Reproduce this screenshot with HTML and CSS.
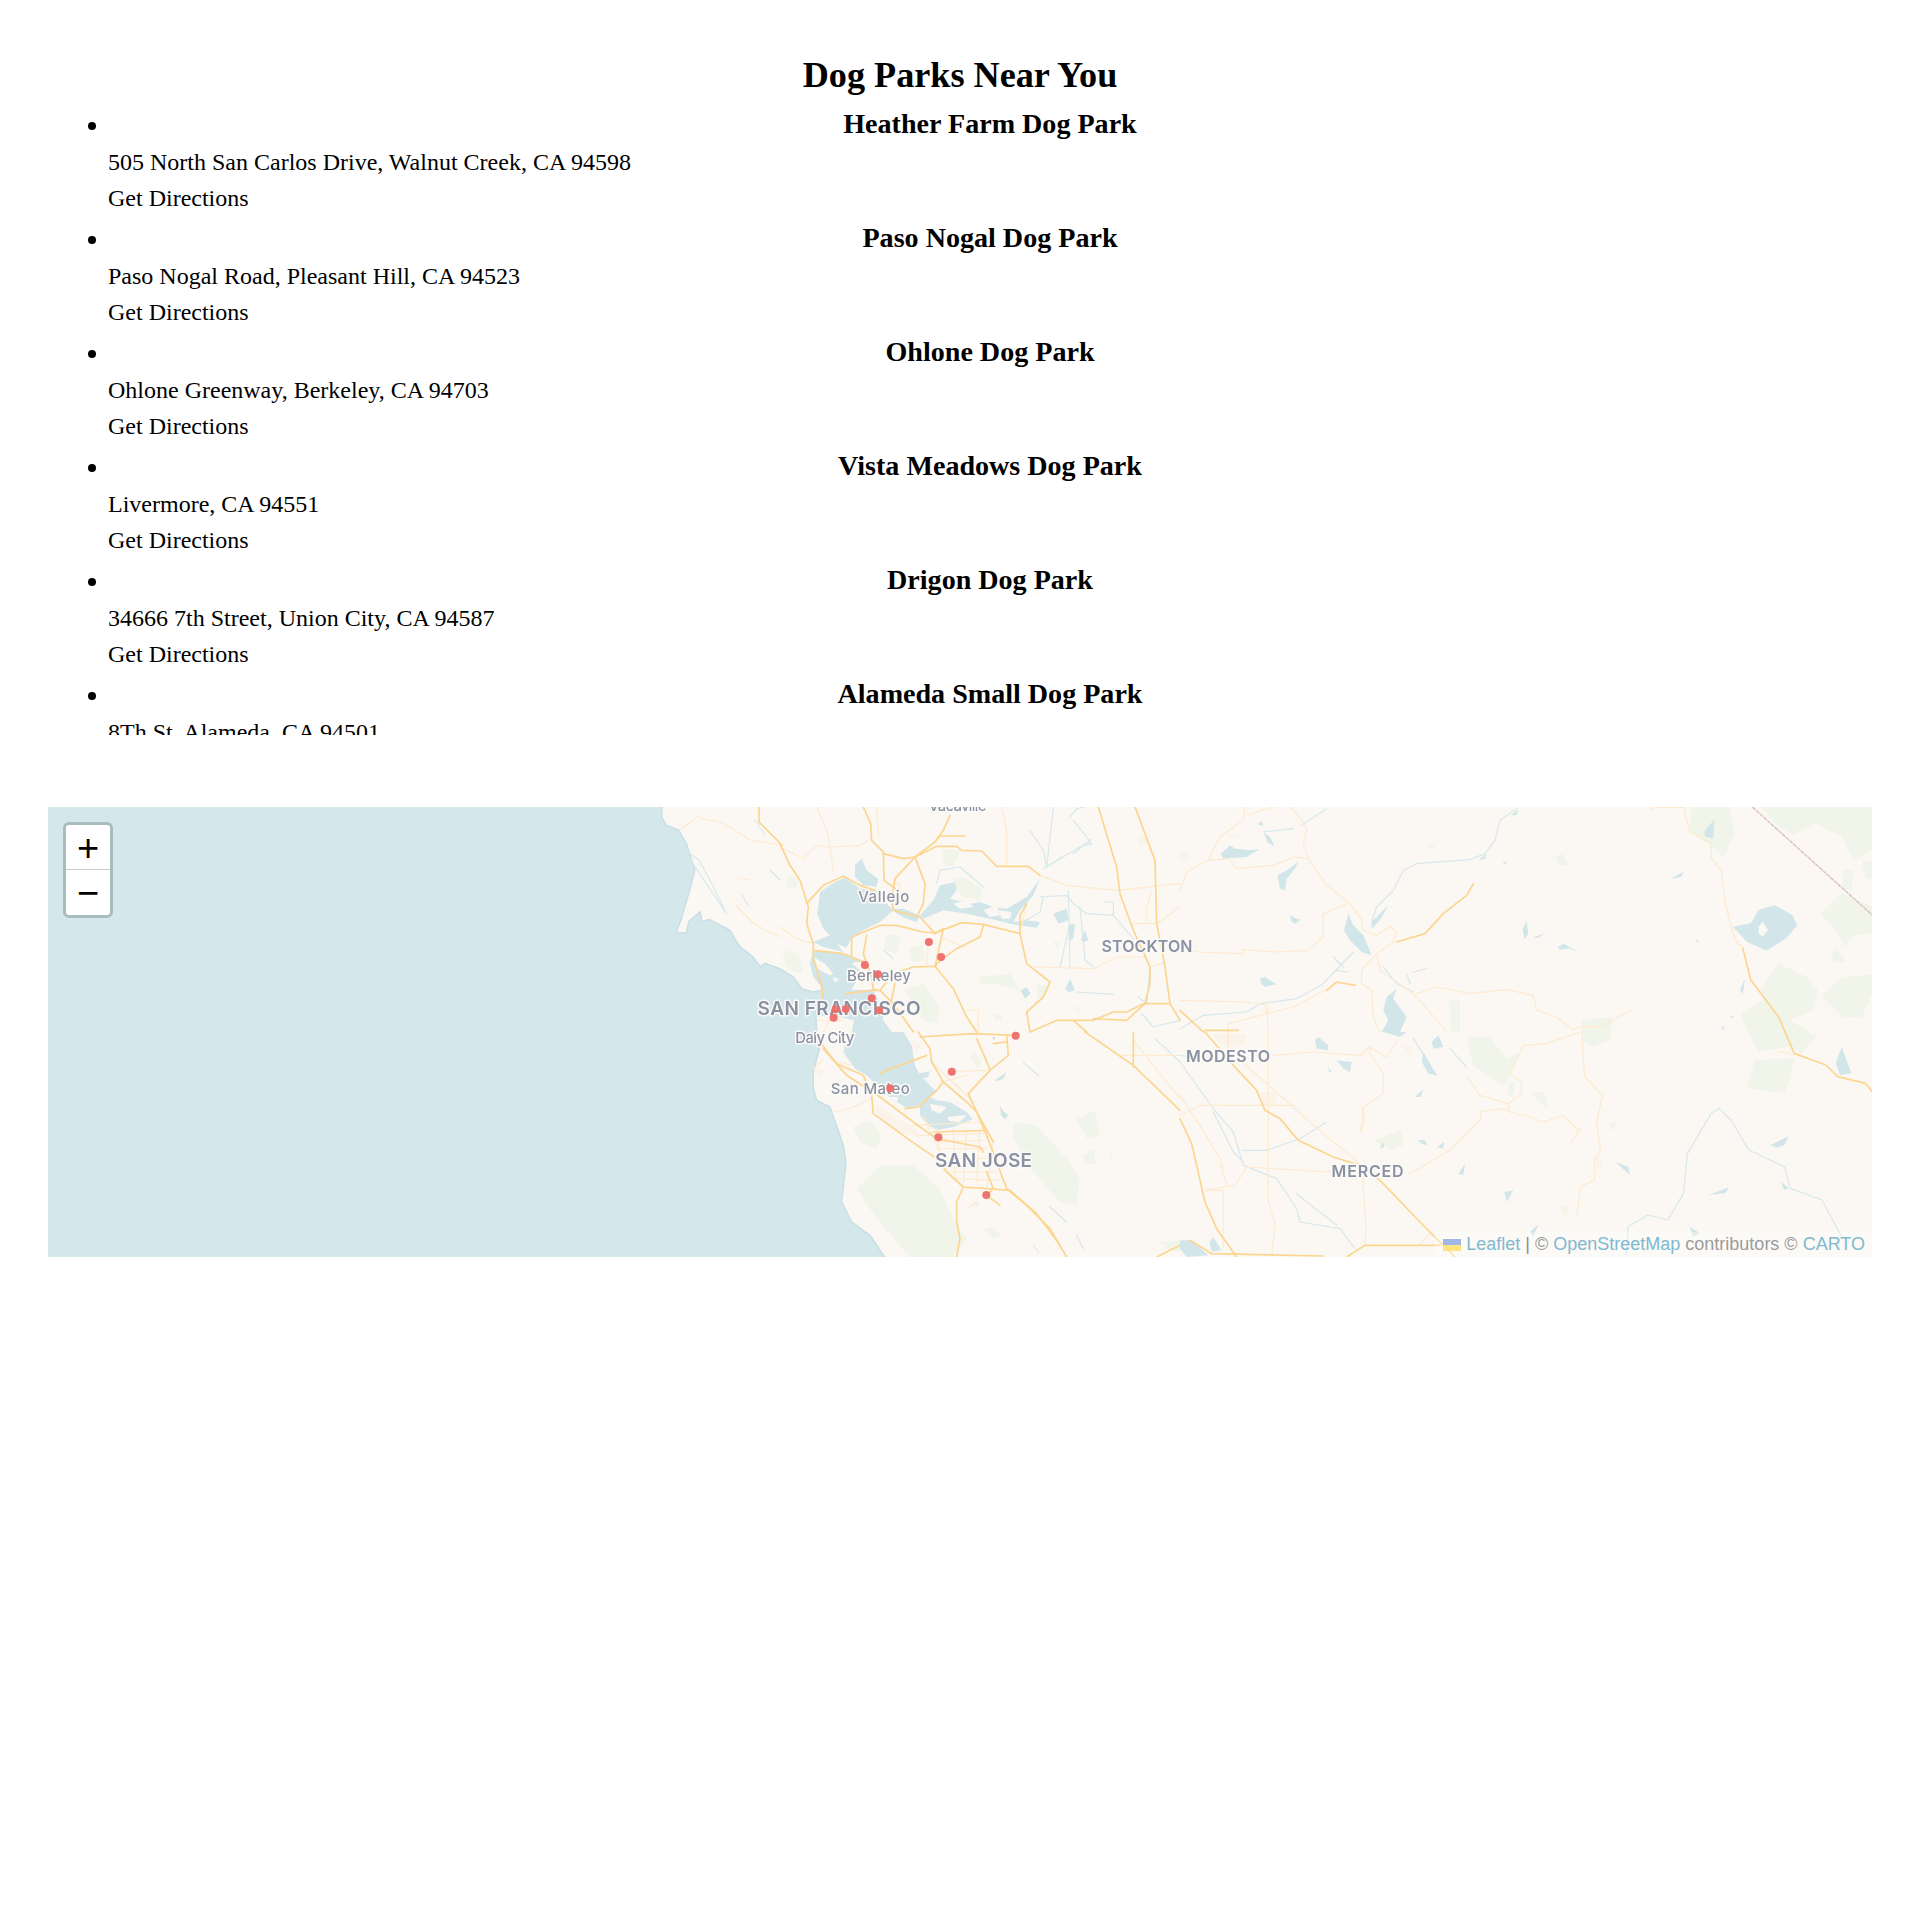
FILE: index.html
```html
<!DOCTYPE html>
<html lang="en">
<head>
<meta charset="utf-8">
<title>Dog Parks Near You</title>
<link rel="stylesheet" href="styles.css">
</head>
<body>
<main class="page">
  <h1 class="title">Dog Parks Near You</h1>
  <ul class="parks">
    <li class="park"><h2 class="park-name">Heather Farm Dog Park</h2><p class="park-line">505 North San Carlos Drive, Walnut Creek, CA 94598</p><p class="park-line">Get Directions</p></li>
    <li class="park"><h2 class="park-name">Paso Nogal Dog Park</h2><p class="park-line">Paso Nogal Road, Pleasant Hill, CA 94523</p><p class="park-line">Get Directions</p></li>
    <li class="park"><h2 class="park-name">Ohlone Dog Park</h2><p class="park-line">Ohlone Greenway, Berkeley, CA 94703</p><p class="park-line">Get Directions</p></li>
    <li class="park"><h2 class="park-name">Vista Meadows Dog Park</h2><p class="park-line">Livermore, CA 94551</p><p class="park-line">Get Directions</p></li>
    <li class="park"><h2 class="park-name">Drigon Dog Park</h2><p class="park-line">34666 7th Street, Union City, CA 94587</p><p class="park-line">Get Directions</p></li>
    <li class="park"><h2 class="park-name">Alameda Small Dog Park</h2><p class="park-line">8Th St, Alameda, CA 94501</p><p class="park-line">Get Directions</p></li>
  </ul>
  <section class="map">
    <svg class="map-art" viewBox="48 807 1824 450" aria-hidden="true">
      <rect class="land" x="40" y="800" width="1840" height="465"/>
      <path class="ocean" d="M40,800H662.2L661.7,816.7L665.8,825L678.6,830L686.2,843.3L694.9,870L688.8,893.3L681,920L676,932.7L686.2,933.3L688.8,921.7L694,917L700,912L702,922L709,919.3L729.6,930L739.8,946.7L752.6,956.7L760.2,966.7L765.3,963.3L780,968.7L793.3,977L801.7,988.7L813.3,992L821.7,990.3L826,1000L816,1017L816.7,1032L819.3,1048.7L813.3,1072L813.3,1088.7L816.7,1100.3L830,1107L843.3,1145.3L846,1162L841.7,1202L851.7,1222L870,1235.3L890,1265H40Z"/>

      <!-- coast north of the bay: 1x page grid -->
      <g class="river">
        <path d="M683.7,849L694,865L726,913L712,884L699,860Z"/>
        <path d="M700,925L712,935L722,950M742,895L748,905M755,820L765,835M770,870L780,880"/>
      </g>
      <g class="park-area"><path d="M788,877L798,875L797,888L790,888Z"/><path d="M783,950L800,955L795,972L785,965Z"/></g>
      <g class="minor">
        <path d="M700,818L723,823L750,840L780,845M738,878L750,880M734,903L753,923L765,930L780,937M680,830L700,815"/>
      </g>
      <g class="major"><path d="M759,807V822L782,845"/></g>

      <!-- north bay crop -->
      <g transform="translate(780 807) scale(.33333)">
        <g class="park-area">
          <path d="M520,210L560,215L610,250L600,280L550,270L525,240Z"/><path d="M490,125L540,130L520,180L490,170Z"/><path d="M320,380L360,385L355,440L310,430Z"/><path d="M385,420L430,415L435,460L395,465Z"/>
          <path d="M600,510L690,500L720,550L640,530L600,530Z"/><path d="M770,530L810,540L790,570L770,570Z"/><path d="M370,550L430,530L480,600L470,650L430,640Z"/><path d="M20,220L50,220L45,245L20,240Z"/><path d="M15,460L60,460L70,500L30,490Z"/><path d="M640,620H665V640H645Z"/><path d="M820,400L840,410L830,425Z"/>
        </g>
        <g class="urban"><path d="M885,600L905,595L900,625L885,620Z"/><path d="M1070,90L1110,80L1105,115L1075,115Z"/></g>
        <path class="bay" d="M120,255L165,225L195,212L240,245L285,250L320,290L340,310L300,345L250,370L215,395L190,435L130,420L100,405L150,385L130,365L112,320Z"/>
        <path class="bay" d="M225,175L245,155L260,190L295,215L290,240L250,235L225,210Z"/>
        <path class="bay" d="M340,305L370,305L420,325L410,345L380,335L350,320Z"/>
        <path class="bay" d="M420,325L460,280L480,235L525,225L530,250L510,275L570,290L600,285L640,300L680,305L740,270L780,215L760,265L720,310L700,345L735,340L780,345L770,362L735,358L690,350L630,335L560,320L490,310L430,335Z"/>
        <path class="bay" d="M100,430L190,438L255,463L215,468L240,490L225,530L215,548L280,550L300,590L310,640L335,675H215L222,640L150,625L105,630L100,600L130,570L125,540L100,510L90,470Z"/>
        <path class="shore" d="M100,450L135,470L160,500L150,505L120,490L105,475Z"/><path class="shore" d="M160,510L175,515L170,525L160,520Z"/><path class="shore" d="M172,410L215,430L205,445L185,430Z"/>
        <path class="bay" d="M820,320L860,305L865,340L835,350Z"/><path class="bay" d="M855,545L870,515L885,550L865,555Z"/><path class="bay" d="M722,550L740,540L752,560L735,575Z"/><path class="bay" d="M902,400L915,370L925,400L912,405Z"/><path class="bay" d="M865,355L885,350L880,395L868,400Z"/>
        <g class="shore">
          <path d="M520,290L560,280L580,300L540,305Z"/><path d="M610,310L650,295L660,325L630,330Z"/><path d="M655,310L695,315L690,335L665,335Z"/>
        </g>
        <g class="river">
          <path d="M800,180L820,0M750,70L790,130L800,180M880,40L920,90L935,115M935,95L880,140M800,180L845,150M790,185L900,120L930,110M870,30L890,5L915,0"/>
          <path d="M780,270L860,265L880,290L920,320L1000,325L1060,395M865,250L870,480M900,300L915,460L940,480M870,350L840,480M730,345L780,315L790,270"/>
          <path d="M890,555L1000,562M1075,570L1100,590L1110,480L1090,430M1085,620L1120,660L1200,640M470,230L480,190L540,180L610,240M310,430L340,455M970,285H1000V325"/>
        </g>
        <g class="minor">
          <path d="M110,0L140,70L150,120L240,115L265,100M0,120L70,155L110,115L150,120M150,120L160,190M0,360L50,395L100,410M665,0L680,70V180M780,205L860,235L1010,250L1200,230"/>
          <path d="M1050,350H1130M1115,250L1100,300V350H1130M760,480L940,485L1010,450H1100M440,470L445,400M490,395L555,420M560,610H595V675M1110,480L1155,465M1130,350L1200,300M740,290L720,380"/>
          <path d="M330,230H360V270M115,640H190M130,675L150,640L200,620M290,0L295,90"/>
        </g>
        <g class="major">
          <path d="M250,0L272,50L275,100L310,135L312,220L345,245"/><path d="M510,25L490,70L465,105L405,150L345,215L335,280L340,310L420,330L465,380"/><path d="M405,150L435,230L430,290L415,320"/>
          <path d="M310,140L370,155L405,150L470,118H530L545,130L605,132L650,178H745L780,205M480,87H555M465,105L480,87"/>
          <path d="M0,110L30,175L60,220L85,300L80,350L100,410V450L125,540L130,575"/><path d="M80,290L130,235L190,208L240,235L285,250"/><path d="M100,430L190,440L250,465"/>
          <path d="M215,390L300,355H350L430,375L465,378L545,347L610,352L720,380"/><path d="M215,390L215,445M260,385L250,440L275,510L280,550L300,550"/><path d="M610,355L600,390L530,425L480,460L465,478L490,365L465,380"/>
          <path d="M465,478L400,480L340,500L300,550L340,590L400,675"/><path d="M465,478L520,545L560,630L590,675"/><path d="M720,380L740,470L810,525L790,570L740,615L750,675"/><path d="M750,675L830,640H940L1000,615H1040L1090,590M940,635L1040,640L1095,590"/><path d="M880,640L920,675"/>
          <path d="M955,0L1010,180L1020,260L1060,370L1110,480V530L1095,590"/><path d="M1065,0L1125,160L1130,350L1155,480L1170,590L1200,640"/><path d="M1095,590H1170M720,380V325L740,290"/><path d="M200,560L290,548M345,530L330,600"/>
        </g>
      </g>

      <!-- south bay crop -->
      <g transform="translate(780 1032) scale(.33333)">
        <g class="park-area">
          <path d="M230,470L300,400H400L480,470L520,560L560,620L520,675H390L290,560Z"/><path d="M220,285L270,265L305,310L290,350L240,330Z"/><path d="M700,270L770,280L860,380L900,440L890,520L840,510L760,420L700,320Z"/><path d="M890,260L945,235L960,310L920,320Z"/><path d="M910,370L945,350V395L915,395Z"/><path d="M585,60L605,90L590,105L570,70Z"/><path d="M640,585L665,610L640,620L610,590Z"/><path d="M985,360L1000,365L995,385Z"/><path d="M580,515L600,510L590,530Z"/><path d="M1140,630L1200,625V660L1160,650Z"/>
        </g>
        <g class="urban"><path d="M290,215L350,260L410,290L420,320L340,290L285,240Z"/><path d="M100,110H140L120,130Z"/><path d="M390,25L425,40L410,60Z"/><path d="M710,425L735,430L720,440Z"/></g>
        <path class="bay" d="M215,0H370L395,40L405,100L420,130L470,180L435,205L415,220L385,230L340,205L310,180L260,130L225,110L190,60L195,30Z"/>
        <path class="bay" d="M420,220L450,195L470,205L510,210L560,240L578,262L520,285L470,295L440,275L420,250Z"/>
        <path class="bay" d="M410,125L450,118L445,135L420,140Z"/><path class="bay" d="M660,222L672,240L685,248L675,262L663,250Z"/><path class="bay" d="M645,145L680,120L670,140L650,148Z"/><path class="bay" d="M636,15H646L642,26Z"/>
        <g class="shore"><path d="M450,215L500,225L480,245L455,235Z"/><path d="M500,255L560,250L540,270L510,268Z"/><path d="M325,195H355L350,210Z"/></g>
        <g class="river"><path d="M730,92L775,130M810,525L860,570M890,610L910,650M760,640L775,660M1125,20L1200,90"/></g>
        <g class="minor">
          <path d="M170,240L220,225L270,200M1060,25L1200,200M1020,70H1200M130,80L100,110M175,90L215,100"/>
          <path d="M400,280L600,270M410,310L620,305M460,330L610,325M480,350L620,350M500,380L640,380M500,420L650,420M520,440L660,445M430,250L500,410M470,290L480,380M520,290L525,440M560,300L550,450M600,290L590,450M640,330L620,470M500,120L620,115M480,150L560,130M455,90L560,190M520,150L580,210M560,470L610,465M560,530L590,510"/>
        </g>
        <g class="major">
          <path d="M415,0L450,50L455,90L490,150L560,210L590,240L620,310L680,470L740,520L810,590L860,675"/><path d="M590,20L625,100L630,115L565,185L590,240L640,330"/><path d="M420,15L490,10L590,5L700,10M640,35L680,30"/><path d="M680,10L685,70L630,115"/>
          <path d="M120,30L170,95L250,130L275,190L280,245L390,325L470,380L500,420L550,465L530,510V570L540,620L530,675"/><path d="M130,50L200,130L300,195L420,285L470,320L600,345L610,360"/><path d="M300,125L320,115L440,70M375,230L415,225L470,175L490,150"/>
          <path d="M460,300L620,295M550,465L690,475L770,545L840,640M620,420L640,470L620,490L660,520M915,0L1060,100L1200,235M1060,0V105M1130,675L1200,640"/>
        </g>
      </g>

      <!-- central valley, north half -->
      <g transform="translate(1180 807) scale(.33333)">
        <g class="park-area"><path d="M745,120L782,100L750,128Z"/><path d="M1125,150L1150,140L1165,175L1140,175Z"/><path d="M808,580H840V675H815Z"/></g>
        <g class="urban"><path d="M0,135H30L25,165H0Z"/><path d="M140,85L185,80L170,100Z"/><path d="M240,610L275,600L265,630Z"/></g>
        <g class="river">
          <path d="M1010,5L960,40L945,100L915,140L870,158L710,170L670,190L640,250L590,300L575,345"/>
          <path d="M0,665L70,625L200,615L240,590L350,575L430,530L520,435M470,490L505,495M610,480L650,530L700,555M680,500L690,530M700,495L740,485M365,55L440,5M250,75L340,65M460,450L490,480"/>
        </g>
        <path class="bay" d="M122,140L150,115L165,125L210,130L240,125L200,150L130,155Z"/><path class="bay" d="M250,75L270,90L285,120L262,105Z"/><path class="bay" d="M232,52L245,42L250,58Z"/><path class="bay" d="M293,205L320,190L355,165L345,185L320,215L315,250L300,245Z"/><path class="bay" d="M330,325L350,335L362,338L345,350L335,345Z"/><path class="bay" d="M240,515L255,510L290,532L255,540L243,530Z"/><path class="bay" d="M1028,365L1040,343L1045,380L1033,397Z"/><path class="bay" d="M1058,392L1095,377L1075,392Z"/><path class="bay" d="M1133,420L1150,410L1200,437L1170,425L1140,428Z"/><path class="bay" d="M992,25L1015,8L1008,25Z"/><path class="bay" d="M898,157L920,140L915,155L900,160Z"/><path class="bay" d="M967,168L982,162L975,172Z"/><path class="bay" d="M492,370L505,320L520,355L550,385L575,445L545,435L510,400Z"/><path class="bay" d="M620,570L650,545L640,575L680,630L660,675H605L625,640L610,610Z"/><path class="bay" d="M575,345L625,295L600,340L575,365Z"/>
        <g class="minor">
          <path d="M195,0L190,40L120,90L85,160L20,195L0,250M85,160L145,155L170,185L280,175L340,150L385,155L440,235L510,290L545,340L550,370L590,385L630,358L650,375L640,405"/>
          <path d="M330,0L370,45L380,65L370,110L385,155M280,0L200,25M500,290L430,320V390L385,430L290,435L190,428L185,440L60,435L0,425"/>
          <path d="M640,405L590,440L545,490V530L575,550L580,630L600,675M590,440L600,490L700,560L780,650L800,675M710,560L770,540L870,560L980,548L1060,565L1070,610L1130,630L1180,670L1200,660"/>
          <path d="M0,580L200,585L260,595L265,675M145,675V650L340,600L435,550"/>
        </g>
        <g class="major"><path d="M880,230L860,265L790,320L735,380L650,405"/><path d="M440,550L470,525L525,535"/><path d="M0,610L70,675M75,670H175"/></g>
      </g>

      <!-- central valley, south half -->
      <g transform="translate(1180 1032) scale(.33333)">
        <g class="park-area"><path d="M580,325L665,295L670,340L630,355Z"/><path d="M860,15H930L980,80L1020,60L990,130L975,160L940,145L880,100Z"/><path d="M985,150H1005L1000,200L985,190Z"/><path d="M1055,180L1090,178L1105,230L1080,210Z"/><path d="M810,80L850,130L825,100Z"/></g>
        <g class="urban"><path d="M100,5H200L190,40H120Z"/><path d="M240,180H285L290,220H250Z"/><path d="M355,330L385,335L365,345Z"/><path d="M110,395H135L125,415Z"/><path d="M665,35L700,50L690,75Z"/><path d="M1135,520L1165,520L1160,560Z"/></g>
        <g class="river"><path d="M0,90L100,230L160,300L190,400L290,440L350,530L360,570L480,590L525,650M185,355H260L360,320L440,270M350,485L470,580M100,240L160,360L190,390M700,20L770,130M810,50L860,105M0,70L60,80"/></g>
        <path class="bay" d="M405,25L415,15L445,40V55L410,50Z"/><path class="bay" d="M470,85L515,90L510,120L490,110Z"/><path class="bay" d="M445,105L455,120L447,122Z"/><path class="bay" d="M730,60L770,130L745,125L725,90Z"/><path class="bay" d="M610,0H680L660,15Z"/><path class="bay" d="M755,30L775,10L790,45L760,50Z"/><path class="bay" d="M705,195L730,170L722,195Z"/><path class="bay" d="M600,345L612,330V345L602,348Z"/><path class="bay" d="M712,325H735L742,340L725,335Z"/><path class="bay" d="M772,345L792,330L790,350Z"/><path class="bay" d="M835,425L855,395L850,430Z"/><path class="bay" d="M973,480L1000,475L980,510Z"/><path class="bay" d="M1050,600L1075,577L1060,615Z"/><path class="bay" d="M0,625H35L85,670L20,675L0,650Z"/><path class="bay" d="M88,630L100,615L125,655L95,660Z"/>
        <g class="minor">
          <path d="M265,0V510L285,575L275,675M145,0V50M180,85L340,225L400,280L540,395M0,250L60,220H345M200,405L165,460L75,475H130V650M200,405L450,420"/>
          <path d="M690,425L810,355L900,265L905,238L970,230L990,240M545,400L558,580L555,640M545,300L550,225L610,185V125L570,65V45L620,75L650,30M545,300L540,290L555,260L545,225"/>
          <path d="M0,190L60,280L120,380L140,460M280,70L400,60L540,70L570,45M860,130L900,190L985,215L990,240L1050,255L1090,270L1150,250L1200,300M985,215L1025,185V150L990,125L1030,40L1100,35L1200,0M720,640L750,600M1175,330L1200,290"/>
        </g>
        <g class="major">
          <path d="M75,0L160,100L230,175L255,235L300,260L355,325L460,375L540,400L600,445L720,570L830,680"/><path d="M0,260L35,335L75,510L110,590L170,675"/><path d="M30,625L95,665L430,672M500,675L555,640H780"/>
        </g>
      </g>

      <!-- sierra edge of the map -->
      <g transform="translate(1300 790) scale(.39541 .33333)">
        <g class="park-area">
          <path d="M990,52H1085L1100,130L1070,205L1040,165L1010,145L985,120Z"/><path d="M1165,52H1447V180L1400,215L1370,140L1300,100L1250,135L1210,110Z"/>
          <path d="M1315,375L1370,310L1447,350V430L1390,440L1380,475L1350,410Z"/><path d="M1375,240H1400L1395,300H1370Z"/><path d="M1420,210L1447,215V265H1430Z"/>
          <path d="M1115,670L1170,630L1165,600L1210,520L1280,560L1310,600L1300,660L1240,690L1305,740L1270,790L1240,770L1160,785L1130,720Z"/>
          <path d="M1320,620L1370,560L1447,555V610L1420,685L1370,680Z"/><path d="M1150,810L1250,805L1240,860L1225,910L1130,895Z"/><path d="M1350,475L1375,500L1380,520L1345,510Z"/>
          <path d="M780,1000H798L795,1025Z"/><path d="M712,690L790,680L785,750L740,770L712,750Z"/>
        </g>
        <g class="urban"><path d="M745,1105H770L755,1140Z"/></g>
        <path class="border" d="M1145,52L1447,375"/>
        <g class="river">
          <path d="M1060,955L1040,970L980,1090L970,1210L930,1290L880,1275L830,1310L825,1395"/>
          <path d="M1060,955L1090,990L1135,1080L1225,1130L1240,1195L1320,1230L1370,1340"/>
        </g>
        <g class="minor">
          <path d="M885,60L900,52H970L985,125L1040,160V205L1065,240L1075,340L1100,450L1120,475"/>
          <path d="M712,720L720,860L765,915L750,1000L760,1080L745,1110V1170L710,1190L700,1280M1215,785L1250,795M712,710H760L840,660"/>
        </g>
        <g class="major"><path d="M1120,475L1140,570L1210,680L1250,790L1330,825L1360,860L1430,880L1447,905"/></g>
        <path class="bay" d="M1095,410L1140,400L1160,360L1200,345L1245,375L1258,405L1230,445L1180,482L1130,455Z"/>
        <path class="shore" d="M1160,410L1170,395L1183,420L1170,440L1160,430Z"/>
        <path class="bay" d="M1022,125L1048,88L1045,145L1025,140Z"/><path class="bay" d="M936,268L970,245L965,260Z"/><path class="bay" d="M1113,600L1125,567L1120,612Z"/>
        <path class="bay" d="M1355,820L1370,770L1385,820L1395,850L1365,855Z"/><path class="bay" d="M1190,1065L1237,1038L1225,1065L1205,1073Z"/><path class="bay" d="M1033,1215L1085,1192L1075,1210Z"/>
        <path class="bay" d="M798,1115L830,1130L835,1155L815,1135Z"/><path class="bay" d="M1215,1175L1237,1195L1225,1200Z"/><path class="bay" d="M985,1310L1012,1330L995,1340Z"/>
        <path class="bay" d="M1000,445L1010,458H1005Z"/><path class="bay" d="M1065,715L1078,705L1070,720Z"/><path class="bay" d="M1088,675L1098,682L1090,685Z"/>
      </g>

      <g class="place place-city">
        <text x="1147" y="951.5" textLength="91">STOCKTON</text>
        <text x="1228" y="1061.5" textLength="84">MODESTO</text>
        <text x="1367.6" y="1177" textLength="72">MERCED</text>
      </g>
      <g class="place place-big">
        <text x="839" y="1014.5" textLength="163">SAN FRANCISCO</text>
        <text x="983.6" y="1166.5" textLength="97">SAN JOSE</text>
      </g>
      <g class="place place-town">
        <text x="957.6" y="811" textLength="58">Vacaville</text>
        <text x="883.7" y="902" textLength="51">Vallejo</text>
        <text x="879" y="981" textLength="64">Berkeley</text>
        <text x="824.8" y="1043" textLength="59">Daly City</text>
        <text x="870.3" y="1094" textLength="79">San Mateo</text>
      </g>
      <g class="pins">
        <circle cx="928.9" cy="942" r="4"/><circle cx="941.1" cy="957" r="4"/><circle cx="864.9" cy="965" r="4"/><circle cx="878" cy="974.3" r="4"/>
        <circle cx="871.8" cy="998.3" r="4"/><circle cx="835.5" cy="1009.3" r="4"/><circle cx="845.8" cy="1009" r="4"/><circle cx="879.1" cy="1010.3" r="4"/>
        <circle cx="833.6" cy="1017.7" r="4"/><circle cx="1015.7" cy="1035.7" r="4"/><circle cx="951.8" cy="1071.7" r="4"/><circle cx="890.2" cy="1088.3" r="4"/>
        <circle cx="938.4" cy="1137.3" r="4"/><circle cx="986.3" cy="1195" r="4"/>
      </g>
    </svg>
    <div class="zoom-box">
      <a class="zoom-btn zoom-in">+</a>
      <a class="zoom-btn zoom-out">−</a>
    </div>
    <div class="credit">
      <svg class="flag" viewBox="0 0 18 12" aria-hidden="true"><rect class="flag-top" width="18" height="6"/><rect class="flag-bot" y="6" width="18" height="6"/></svg>
      <a class="credit-link">Leaflet</a> <span class="credit-sep">|</span> © <a class="credit-link">OpenStreetMap</a> contributors © <a class="credit-link">CARTO</a>
    </div>
  </section>
</main>
</body>
</html>
```
FILE: styles.css
```css
html, body { margin: 0; background: #fff; }
body { font-family: "Liberation Serif", "Times New Roman", serif; color: #000; }
.page { padding: 48px 48px 0; min-height: 1870px; box-sizing: border-box; }
.title { margin: 0; font-size: 36.2px; line-height: 54px; text-align: center; font-weight: 700; }
.parks { margin: 0 0 72px; padding: 0 0 0 60px; height: 633px; overflow-y: auto; list-style: none; }
.park { position: relative; font-size: 24px; }
.park::before { content: ""; position: absolute; left: -20px; top: 20px; width: 8px; height: 8px; border-radius: 50%; background: #000; }
.park-name { margin: 0 0 -2px; font-size: 28.08px; line-height: 44.08px; font-weight: 700; text-align: center; }
.park-line { margin: 0; font-size: 24px; line-height: 36px; }

.map { position: relative; height: 450px; overflow: hidden; }
.map-art { display: block; width: 100%; height: 100%; filter: blur(.45px); }
.land, .shore, .shore path { fill: #fbf8f3; }
.ocean { fill: #d4e7eb; stroke: #c8dfe4; stroke-width: 1.5; }
.bay { fill: #d2e6ea; }
.park-area { filter: blur(1.5px); }
.park-area path { fill: #f1f4e9; }
.urban { filter: blur(1.5px); }
.urban path { fill: #faf3ea; }
.major path, .minor path, .river path, .border { fill: none; vector-effect: non-scaling-stroke; stroke-linejoin: round; stroke-linecap: round; }
.major path { stroke: #fcd590; stroke-width: 1.7; }
.minor path { stroke: #fdeacf; stroke-width: 1.2; }
.river path { stroke: #d6e8ec; stroke-width: 1.2; }
.border { stroke: #dcc3c3; stroke-width: 1.5; stroke-dasharray: 3 2; }
.place text { text-anchor: middle; fill: #8a91a3; stroke: #fcfaf7; stroke-width: 3px; paint-order: stroke; stroke-linejoin: round; font-family: Inter, "Noto Sans", sans-serif; }
.place-city text { font-size: 16px; font-weight: 600; }
.place-big text { font-size: 19px; font-weight: 600; }
.place-town text { font-size: 15px; font-weight: 500; }
.pins circle { fill: #ee6b68; fill-opacity: .95; }

.zoom-box { position: absolute; left: 15px; top: 15px; width: 44px; border: 3px solid #a9bcc0; border-radius: 6px; background: #fff; overflow: hidden; }
.zoom-btn { display: block; height: 44px; line-height: 46px; text-align: center; font-family: "Liberation Sans", Arial, sans-serif; font-size: 38px; font-weight: 400; color: #000; }
.zoom-in { border-bottom: 1px solid #ccc; }
.zoom-out { height: 45px; }

.credit { position: absolute; right: 0; bottom: 0; height: 25px; line-height: 25px; padding: 0 7px 0 8px; font-family: "Liberation Sans", Arial, sans-serif; font-size: 18px; color: #9b9b9b; background: rgba(255,255,255,.3); white-space: nowrap; }
.credit-link { color: #7fb9d0; }
.credit-sep { color: #8c8c8c; }
.flag { width: 18px; height: 12px; vertical-align: -1px; }
.flag-top { fill: #a0b8e8; }
.flag-bot { fill: #fde480; }
```
